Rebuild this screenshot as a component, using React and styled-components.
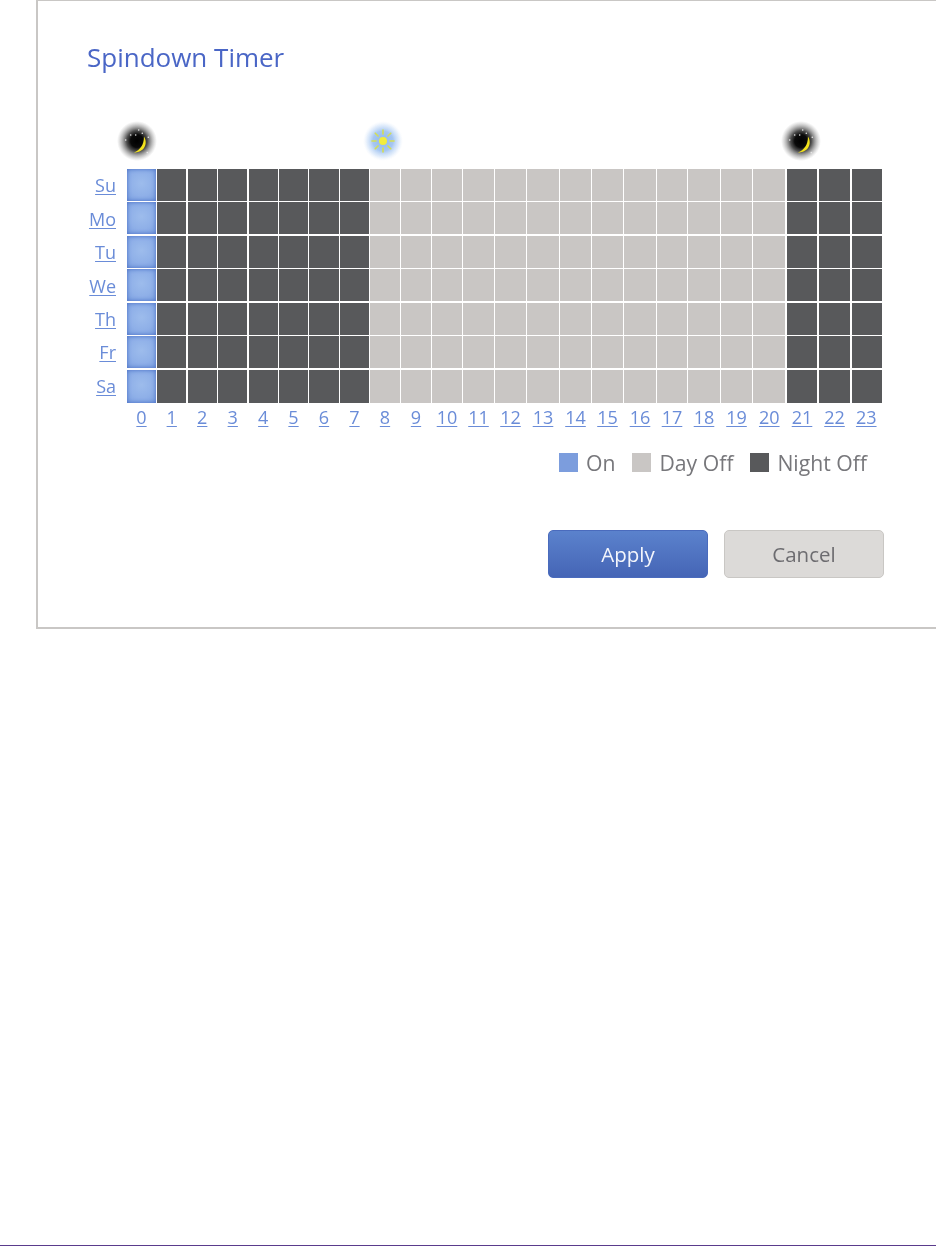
import React from 'react';
import styled, { createGlobalStyle } from 'styled-components';

const Global = createGlobalStyle`
  html, body { margin: 0; padding: 0; background: #fff; }
  #root { width: 936px; }
`;

const FONT = `"Open Sans", "Noto Sans", "Liberation Sans", sans-serif`;
const TRACKS = [30, 30.5, 30.5, 30.5, 30.5, 30, 31, 30, 31, 31, 31, 32, 32, 33, 32, 32, 33, 31, 33, 32, 33.5, 32, 33, 30.5];
const DAYS = ['Su', 'Mo', 'Tu', 'We', 'Th', 'Fr', 'Sa'];

const Page = styled.div`
  width: 936px;
  height: 1246px;
  display: flex;
  flex-direction: column;
  justify-content: space-between;
  overflow: hidden;
  font-family: ${FONT};
`;
const Panel = styled.section`
  box-sizing: border-box;
  margin-left: 36px;
  width: 900px;
  height: 629px;
  border-top: 1.5px solid #c9c7c5;
  border-left: 2px solid #c9c7c5;
  border-bottom: 2px solid #c9c7c5;
  display: flex;
  flex-direction: column;
  filter: blur(0.4px);
`;
const Title = styled.h1`
  margin: 38px 0 0 49px;
  height: 36px;
  font-size: 26px;
  line-height: 36px;
  font-weight: 400;
  color: #4a66c6;
`;
const Schedule = styled.div`
  margin-top: 46px;
  display: grid;
  grid-template-columns: 89px ${TRACKS.map((t) => `${t}px`).join(' ')};
  grid-template-rows: 40px 8px repeat(7, 33.45px) 28px;
`;
const IconSlot = styled.div`
  grid-row: 1;
  grid-column: ${(p) => p.$col + 2};
  justify-self: center;
  transform: translateX(${(p) => p.$shift}px);
  width: 40px;
  height: 40px;
`;
const DayLink = styled.a`
  grid-column: 1;
  grid-row: ${(p) => p.$row + 3};
  justify-self: end;
  align-self: center;
  margin: 0 11px 1px 0;
  font-size: 18px;
  line-height: 22px;
  color: #6a8cd8;
  text-decoration: underline;
  text-underline-offset: 2px;
`;
const HourLink = styled.a`
  grid-row: 10;
  grid-column: ${(p) => p.$col + 2};
  justify-self: center;
  align-self: center;
  margin-right: 1px;
  font-size: 18px;
  line-height: 24px;
  color: #6a8cd8;
  text-decoration: underline;
  text-underline-offset: 2px;
`;
const cellBg = {
  on: 'radial-gradient(circle at 50% 45%, #9dbcec 0%, #8fb0e8 55%, #7b9fe0 100%)',
  day: '#c9c6c4',
  night: '#58595b',
};
const Cell = styled.div`
  grid-row: ${(p) => p.$row + 3};
  grid-column: ${(p) => p.$col + 2};
  margin: 0 ${(p) => (p.$col === 23 ? 0 : 1.5)}px ${(p) => (p.$row === 6 ? 0 : 1.5)}px 0;
  background: ${(p) => cellBg[p.$kind]};
  box-shadow: ${(p) => (p.$kind === 'on' ? 'inset 0 0 4px #4a6fc5' : 'none')};
`;
const Legend = styled.div`
  margin-top: 15px;
  padding-right: 69px;
  display: flex;
  justify-content: flex-end;
  align-items: center;
  height: 32px;
`;
const LegendItem = styled.div`
  display: flex;
  align-items: center;
  gap: 8px;
  margin-left: 17px;
  font-size: 21.2px;
  color: #77777b;
`;
const Swatch = styled.span`
  width: 19px;
  height: 19px;
  background: ${(p) => p.$color};
`;
const Actions = styled.div`
  margin-top: 52px;
  padding-right: 52px;
  display: flex;
  justify-content: flex-end;
  gap: 16px;
`;
const Button = styled.button`
  box-sizing: border-box;
  width: 160px;
  height: 48px;
  border-radius: 5px;
  font-family: ${FONT};
  font-size: 20.5px;
  padding: 0;
  border: 1px solid ${(p) => (p.$primary ? '#4a6bbd' : '#c9c7c4')};
  color: ${(p) => (p.$primary ? '#f4f6fc' : '#6d6c70')};
  background: ${(p) => (p.$primary ? 'linear-gradient(#5b82cd, #4565b6)' : '#dcdad8')};
`;
const BottomRule = styled.div`
  height: 1px;
  background: #5a3b8c;
`;

const Moon = ({ id }) => (
  <svg width="40" height="40" viewBox="0 0 40 40">
    <defs>
      <radialGradient id={id}>
        <stop offset="0%" stopColor="#000" />
        <stop offset="32%" stopColor="#0a0a0a" />
        <stop offset="52%" stopColor="#222" stopOpacity="0.8" />
        <stop offset="76%" stopColor="#555" stopOpacity="0.4" />
        <stop offset="100%" stopColor="#888" stopOpacity="0" />
      </radialGradient>
    </defs>
    <circle cx="20" cy="20" r="20" fill={`url(#${id})`} />
    <path d="M27 15.5C31.5 23 27 31.5 17 31.5C23 29 27 24 27 15.5Z" fill="#f3e31c" />
    {[[8.7, 19], [13.7, 14], [18.7, 14], [21.7, 9], [25.3, 12.3], [31.3, 16.3], [30.3, 31.6]].map(([x, y]) => (
      <circle key={`${x}-${y}`} cx={x} cy={y} r="0.8" fill="#e8e8e8" />
    ))}
  </svg>
);

const Sun = () => (
  <svg width="40" height="40" viewBox="0 0 40 40">
    <defs>
      <radialGradient id="sunGlow">
        <stop offset="0%" stopColor="#8fb8ec" />
        <stop offset="50%" stopColor="#9cc0f0" stopOpacity="0.9" />
        <stop offset="80%" stopColor="#b8d3f5" stopOpacity="0.4" />
        <stop offset="100%" stopColor="#dfeafa" stopOpacity="0" />
      </radialGradient>
    </defs>
    <circle cx="20" cy="20" r="20" fill="url(#sunGlow)" />
    <g stroke="#d3de55" strokeWidth="1.6" strokeLinecap="round">
      {[0, 45, 90, 135, 180, 225, 270, 315].map((a) => (
        <line key={a} x1="20" y1="13" x2="20" y2="9" transform={`rotate(${a} 20 20)`} />
      ))}
    </g>
    <circle cx="20" cy="20" r="4" fill="#f2ec3c" />
  </svg>
);

const kindOf = (col) => (col === 0 ? 'on' : col >= 8 && col <= 20 ? 'day' : 'night');

export default function App() {
  return (
    <Page>
      <Global />
      <Panel>
        <Title>Spindown Timer</Title>
        <Schedule>
          <IconSlot $col={0} $shift={-5}><Moon id="moonA" /></IconSlot>
          <IconSlot $col={8} $shift={-3}><Sun /></IconSlot>
          <IconSlot $col={21} $shift={-2}><Moon id="moonB" /></IconSlot>
          {DAYS.map((d, row) => (
            <React.Fragment key={d}>
              <DayLink $row={row}>{d}</DayLink>
              {TRACKS.map((_, col) => (
                <Cell key={col} $row={row} $col={col} $kind={kindOf(col)} />
              ))}
            </React.Fragment>
          ))}
          {TRACKS.map((_, col) => (
            <HourLink key={col} $col={col}>{col}</HourLink>
          ))}
        </Schedule>
        <Legend>
          <LegendItem><Swatch $color="#7c9ddd" />On</LegendItem>
          <LegendItem><Swatch $color="#c9c6c4" />Day Off</LegendItem>
          <LegendItem><Swatch $color="#58595b" />Night Off</LegendItem>
        </Legend>
        <Actions>
          <Button $primary>Apply</Button>
          <Button>Cancel</Button>
        </Actions>
      </Panel>
      <BottomRule />
    </Page>
  );
}
